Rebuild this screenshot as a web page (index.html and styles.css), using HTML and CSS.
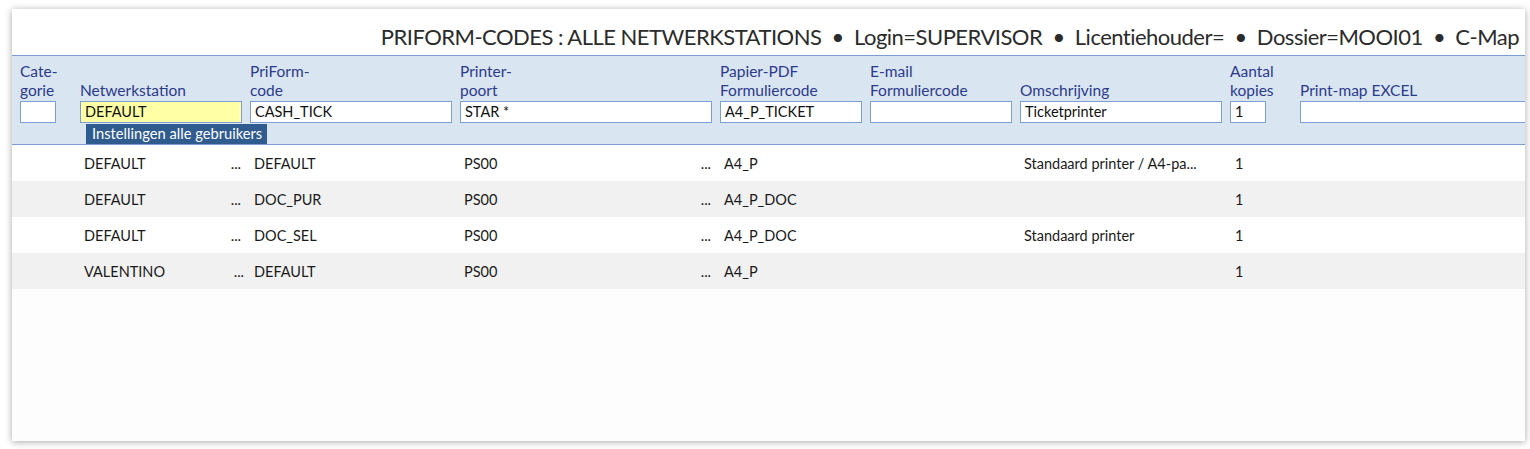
FILE: index.html
```html
<!DOCTYPE html>
<html lang="nl">
<head>
<meta charset="utf-8">
<title>PriForm-codes</title>
<link rel="stylesheet" href="styles.css">
</head>
<body>
<div class="panel">
  <div class="title">PRIFORM-CODES : ALLE NETWERKSTATIONS &nbsp;•&nbsp; Login=SUPERVISOR &nbsp;•&nbsp; Licentiehouder= &nbsp;•&nbsp; Dossier=MOOI01 &nbsp;•&nbsp; C-Map</div>
  <div class="filters">
    <div class="fcol c-cat">
      <div class="lbl">Cate-<br>gorie</div>
      <div class="inp w36"></div>
    </div>
    <div class="fcol c-net">
      <div class="lbl">Netwerkstation</div>
      <div class="inp yellow">DEFAULT</div>
      <div class="tip">Instellingen alle gebruikers</div>
    </div>
    <div class="fcol c-pri">
      <div class="lbl">PriForm-<br>code</div>
      <div class="inp">CASH_TICK</div>
    </div>
    <div class="fcol c-prt">
      <div class="lbl">Printer-<br>poort</div>
      <div class="inp">STAR *</div>
    </div>
    <div class="fcol c-pap">
      <div class="lbl">Papier-PDF<br>Formuliercode</div>
      <div class="inp">A4_P_TICKET</div>
    </div>
    <div class="fcol c-eml">
      <div class="lbl">E-mail<br>Formuliercode</div>
      <div class="inp"></div>
    </div>
    <div class="fcol c-oms">
      <div class="lbl">Omschrijving</div>
      <div class="inp">Ticketprinter</div>
    </div>
    <div class="fcol c-aan">
      <div class="lbl">Aantal<br>kopies</div>
      <div class="inp w36">1</div>
    </div>
    <div class="fcol c-map">
      <div class="lbl">Print-map EXCEL</div>
      <div class="inp open"></div>
    </div>
  </div>
  <div class="rows">
    <div class="row">
      <div class="cell c-cat"></div>
      <div class="cell c-net split"><span>DEFAULT</span><span class="dots">...</span></div>
      <div class="cell c-pri">DEFAULT</div>
      <div class="cell c-prt split"><span>PS00</span><span class="dots">...</span></div>
      <div class="cell c-pap">A4_P</div>
      <div class="cell c-eml"></div>
      <div class="cell c-oms">Standaard printer / A4-pa...</div>
      <div class="cell c-aan">1</div>
      <div class="cell c-map"></div>
    </div>
    <div class="row alt">
      <div class="cell c-cat"></div>
      <div class="cell c-net split"><span>DEFAULT</span><span class="dots">...</span></div>
      <div class="cell c-pri">DOC_PUR</div>
      <div class="cell c-prt split"><span>PS00</span><span class="dots">...</span></div>
      <div class="cell c-pap">A4_P_DOC</div>
      <div class="cell c-eml"></div>
      <div class="cell c-oms"></div>
      <div class="cell c-aan">1</div>
      <div class="cell c-map"></div>
    </div>
    <div class="row">
      <div class="cell c-cat"></div>
      <div class="cell c-net split"><span>DEFAULT</span><span class="dots">...</span></div>
      <div class="cell c-pri">DOC_SEL</div>
      <div class="cell c-prt split"><span>PS00</span><span class="dots">...</span></div>
      <div class="cell c-pap">A4_P_DOC</div>
      <div class="cell c-eml"></div>
      <div class="cell c-oms">Standaard printer</div>
      <div class="cell c-aan">1</div>
      <div class="cell c-map"></div>
    </div>
    <div class="row alt">
      <div class="cell c-cat"></div>
      <div class="cell c-net split"><span>VALENTINO</span><span class="dots dots-r">...</span></div>
      <div class="cell c-pri">DEFAULT</div>
      <div class="cell c-prt split"><span>PS00</span><span class="dots">...</span></div>
      <div class="cell c-pap">A4_P</div>
      <div class="cell c-eml"></div>
      <div class="cell c-oms"></div>
      <div class="cell c-aan">1</div>
      <div class="cell c-map"></div>
    </div>
  </div>
</div>
</body>
</html>
```

FILE: styles.css
```css
* { box-sizing: border-box; }
html, body { margin: 0; padding: 0; background: #ffffff; }
body {
  font-family: Lato, "Open Sans", "Liberation Sans", sans-serif;
  color: #1e1e1e;
  overflow: hidden;
  height: 449px;
}
.panel {
  margin: 9px 5px 0 12px;
  width: 1513px;
  height: 432px;
  background: #fdfdfd;
  box-shadow: 0 1px 7px rgba(0, 0, 0, 0.35);
  display: flex;
  flex-direction: column;
  overflow: hidden;
}
.title {
  height: 46px;
  background: #ffffff;
  font-size: 22px;
  letter-spacing: -0.52px;
  color: #2b2b2b;
  text-align: right;
  white-space: nowrap;
  padding: 15px 6px 0 0;
  line-height: 26px;
}
.filters {
  position: relative;
  display: grid;
  grid-template-columns: 60px 170px 210px 260px 150px 150px 210px 70px 1fr;
  padding: 6px 0 22px 8px;
  background: #dae5f2;
  border-top: 1px solid #7d9ed2;
  border-bottom: 1px solid #7d9ed2;
  height: 90px;
}
.fcol { position: relative; display: flex; flex-direction: column; }
.lbl {
  height: 39px;
  display: flex;
  align-items: flex-end;
  font-size: 15.5px;
  line-height: 18.5px;
  color: #2c3a8a;
  padding-bottom: 2px;
}
.inp {
  height: 22px;
  width: calc(100% - 8px);
  background: #ffffff;
  border: 1px solid #7d9ed2;
  font-size: 14.5px;
  line-height: 20px;
  padding-left: 4px;
  color: #111;
  white-space: nowrap;
}
.inp.w36 { width: 36px; }
.inp.open { width: 100%; border-right: none; }
.inp.yellow { background: #ffffa6; }
.tip {
  position: absolute;
  left: 6px;
  top: 62px;
  height: 20px;
  padding: 0 5px 0 6px;
  background: #2f5b8f;
  color: #ffffff;
  font-size: 14.7px;
  line-height: 19px;
  white-space: nowrap;
}
.rows { display: flex; flex-direction: column; }
.row {
  display: grid;
  grid-template-columns: 60px 170px 210px 260px 150px 150px 210px 70px 1fr;
  padding-left: 8px;
  height: 36px;
  background: #ffffff;
  align-items: center;
  font-size: 14.5px;
  color: #1a1a1a;
}
.row.alt { background: #f1f1f1; }
.cell { padding-left: 4px; white-space: nowrap; overflow: hidden; }
.cell.split { display: flex; justify-content: space-between; padding-right: 9px; }
.cell.c-aan { padding-left: 5px; }
.dots-r { margin-right: -3px; }
```
